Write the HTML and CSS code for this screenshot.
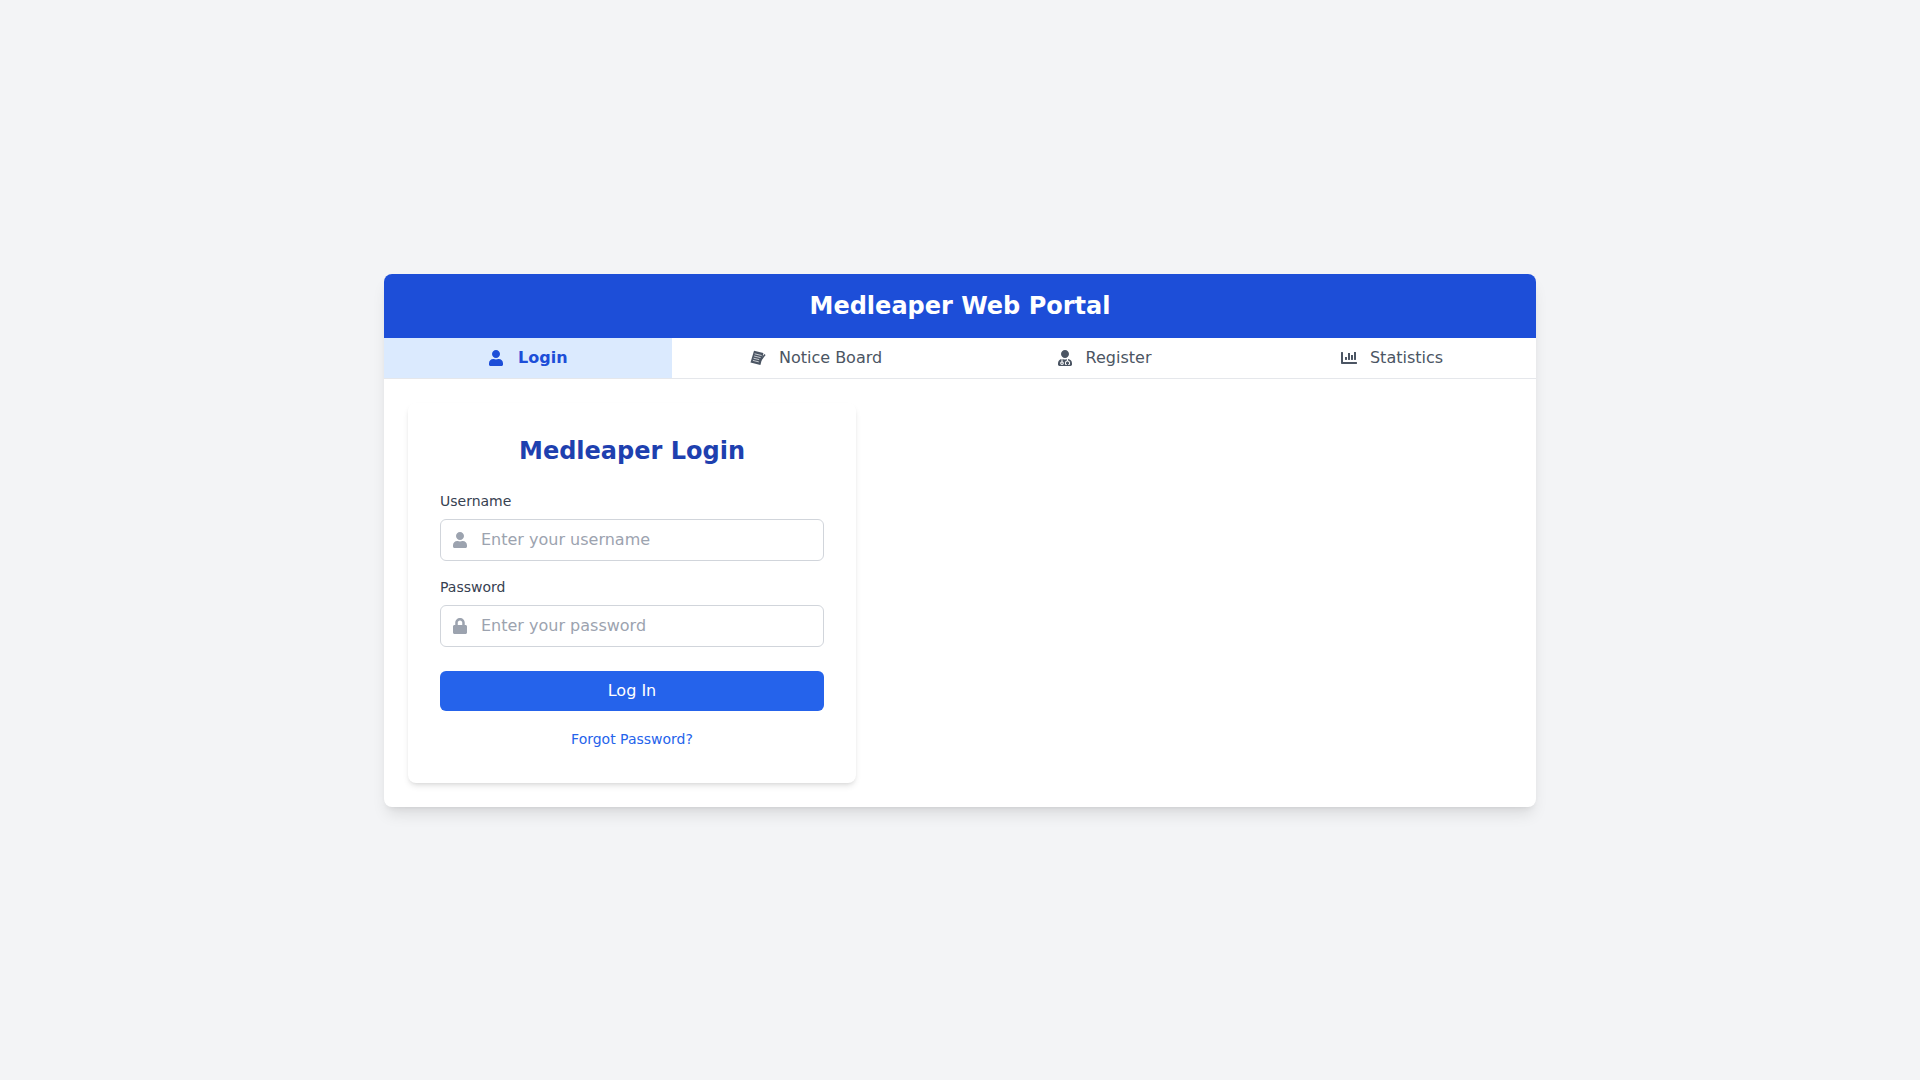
FILE: index.html
```
<!DOCTYPE html>
<html lang="en">
<head>
<meta charset="UTF-8">
<meta name="viewport" content="width=device-width, initial-scale=1.0">
<title>Medleaper Web Portal</title>
<link rel="stylesheet" href="styles.css">
</head>
<body>
<div class="portal">
	<header class="portal-header">
		<h1>Medleaper Web Portal</h1>
	</header>

	<!-- Tabs -->
	<nav class="tabs">
		<button type="button" class="tab active">
			<svg class="icon" width="16" height="16" viewBox="0 0 448 512" aria-hidden="true"><path d="M224 256c70.7 0 128-57.3 128-128S294.7 0 224 0 96 57.3 96 128s57.3 128 128 128zm89.6 32h-16.7c-22.2 10.2-46.9 16-72.9 16s-50.6-5.8-72.9-16h-16.7C60.2 288 0 348.2 0 422.4V464c0 26.5 21.5 48 48 48h352c26.5 0 48-21.5 48-48v-41.6c0-74.2-60.2-134.4-134.4-134.4z"/></svg>
			Login
		</button>
		<button type="button" class="tab">
			<svg class="icon" width="16" height="16" viewBox="0 0 16 16" aria-hidden="true">
				<path d="M4 0.8L13.4 3L12.8 6L10.4 15L0.5 12.6Z"/>
				<path class="lines" d="M4.6 3.8L11.6 5.5M4.1 6L10.6 7.6M3.5 8.2L9.2 9.6M2.9 10.4L8.8 11.9"/>
				<path d="M14.4 4L15.6 5L11.4 10.6L9.8 11.4L10 9.6Z"/>
			</svg>
			Notice Board
		</button>
		<button type="button" class="tab">
			<svg class="icon" width="16" height="16" viewBox="0 0 448 512" aria-hidden="true"><path d="M224 256c70.7 0 128-57.3 128-128S294.7 0 224 0 96 57.3 96 128s57.3 128 128 128zM104 424c0 13.3 10.7 24 24 24s24-10.7 24-24-10.7-24-24-24-24 10.7-24 24zm216-135.4v49c36.5 7.4 64 39.8 64 78.4v41.7c0 7.6-5.4 14.2-12.9 15.7l-32.2 6.4c-4.3.9-8.5-1.9-9.4-6.3l-3.1-15.7c-.9-4.3 1.9-8.6 6.3-9.4l19.3-3.9V416c0-62.8-96-65.1-96 1.9v26.7l19.3 3.9c4.3.9 7.1 5.1 6.3 9.4l-3.1 15.7c-.9 4.3-5.1 7.1-9.4 6.3l-31.2-4.2c-7.9-1.1-13.8-7.8-13.8-15.9V416c0-38.6 27.5-70.9 64-78.4v-45.2c-2.2.7-4.4 1.1-6.6 1.9-18 6.3-37.3 9.8-57.4 9.8s-39.4-3.5-57.4-9.8c-7.4-2.6-14.9-4.2-22.6-5.2v81.6c23.1 6.9 40 28.1 40 53.4 0 30.9-25.1 56-56 56s-56-25.1-56-56c0-25.3 16.9-46.5 40-53.4v-80.4C48.5 301 0 355.8 0 422.4v44.8C0 491.9 20.1 512 44.8 512h358.4c24.7 0 44.8-20.1 44.8-44.8v-44.8c0-72-56.8-130.3-128-133.8z"/></svg>
			Register
		</button>
		<button type="button" class="tab">
			<svg class="icon" width="16" height="16" viewBox="0 0 512 512" aria-hidden="true"><path d="M332.8 320h38.4c6.4 0 12.8-6.4 12.8-12.8V172.8c0-6.4-6.4-12.8-12.8-12.8h-38.4c-6.4 0-12.8 6.4-12.8 12.8v134.4c0 6.4 6.4 12.8 12.8 12.8zm96 0h38.4c6.4 0 12.8-6.4 12.8-12.8V76.8c0-6.4-6.4-12.8-12.8-12.8h-38.4c-6.4 0-12.8 6.4-12.8 12.8v230.4c0 6.4 6.4 12.8 12.8 12.8zm-288 0h38.4c6.4 0 12.8-6.4 12.8-12.8v-70.4c0-6.4-6.4-12.8-12.8-12.8h-38.4c-6.4 0-12.8 6.4-12.8 12.8v70.4c0 6.4 6.4 12.8 12.8 12.8zm96 0h38.4c6.4 0 12.8-6.4 12.8-12.8V108.8c0-6.4-6.4-12.8-12.8-12.8h-38.4c-6.4 0-12.8 6.4-12.8 12.8v198.4c0 6.4 6.4 12.8 12.8 12.8zM496 384H64V80c0-8.8-7.2-16-16-16H16C7.2 64 0 71.2 0 80v336c0 17.7 14.3 32 32 32h464c8.8 0 16-7.2 16-16v-32c0-8.8-7.2-16-16-16z"/></svg>
			Statistics
		</button>
	</nav>

	<!-- Login form -->
	<main class="content">
		<form class="login-card">
			<h2>Medleaper Login</h2>
			<div class="field">
				<label for="username">Username</label>
				<div class="input-box">
					<svg width="14" height="16" viewBox="0 0 448 512" aria-hidden="true"><path d="M224 256c70.7 0 128-57.3 128-128S294.7 0 224 0 96 57.3 96 128s57.3 128 128 128zm89.6 32h-16.7c-22.2 10.2-46.9 16-72.9 16s-50.6-5.8-72.9-16h-16.7C60.2 288 0 348.2 0 422.4V464c0 26.5 21.5 48 48 48h352c26.5 0 48-21.5 48-48v-41.6c0-74.2-60.2-134.4-134.4-134.4z"/></svg>
					<input type="text" id="username" placeholder="Enter your username">
				</div>
			</div>
			<div class="field">
				<label for="password">Password</label>
				<div class="input-box">
					<svg width="14" height="16" viewBox="0 0 448 512" aria-hidden="true"><path d="M400 224h-24v-72C376 68.2 307.8 0 224 0S72 68.2 72 152v72H48c-26.5 0-48 21.5-48 48v192c0 26.5 21.5 48 48 48h352c26.5 0 48-21.5 48-48V272c0-26.5-21.5-48-48-48zm-104 0H152v-72c0-39.7 32.3-72 72-72s72 32.3 72 72v72z"/></svg>
					<input type="password" id="password" placeholder="Enter your password">
				</div>
			</div>
			<button type="submit" class="login-btn">Log In</button>
			<div class="forgot">
				<a href="#">Forgot Password?</a>
			</div>
		</form>
	</main>
</div>
</body>
</html>
```

FILE: styles.css
```
*{
	box-sizing: border-box;
	margin: 0;
	padding: 0;
}
body{
	min-height: 100vh;
	display: flex;
	align-items: center;
	justify-content: center;
	background: #f3f4f6;
	color: #000;
	font-family: "DejaVu Sans", sans-serif;
	font-size: 16px;
	line-height: 24px;
}
button, input{
	font: inherit;
	border: none;
	background: none;
}
button{
	cursor: pointer;
}

.portal{
	width: 100%;
	max-width: 1152px;
	background: #fff;
	border-radius: 8px;
	overflow: hidden;
	box-shadow: 0 10px 15px -3px rgba(0,0,0,0.1), 0 4px 6px -4px rgba(0,0,0,0.1);
}
.portal-header{
	padding: 16px;
	background: #1d4ed8;
	color: #fff;
	text-align: center;
}
h1, h2{
	font-size: 24px;
	line-height: 32px;
	font-weight: bold;
}

/* tabs */
.tabs{
	display: flex;
	border-bottom: 1px solid #e5e7eb;
}
.tab{
	flex: 1;
	padding: 8px 16px;
	color: #4b5563;
}
.tab.active{
	background: #dbeafe;
	color: #1d4ed8;
	font-weight: bold;
}
.icon{
	margin-right: 8px;
	vertical-align: -3px;
	fill: currentColor;
}
.lines{
	fill: none;
	stroke: #fff;
	stroke-width: 0.7;
}

/* login */
.content{
	padding: 24px;
}
.login-card{
	max-width: 448px;
	padding: 32px;
	border-radius: 8px;
	background: #fff;
	box-shadow: 0 4px 6px -1px rgba(0,0,0,0.1), 0 2px 4px -2px rgba(0,0,0,0.1);
}
.login-card h2{
	margin-bottom: 24px;
	color: #1e40af;
	text-align: center;
}
.field{
	margin-bottom: 16px;
}
.field label{
	display: block;
	margin-bottom: 8px;
	color: #374151;
	font-size: 14px;
	line-height: 20px;
}
.input-box{
	display: flex;
	align-items: center;
	padding-left: 12px;
	border: 1px solid #d1d5db;
	border-radius: 6px;
}
.input-box:focus-within{
	border-color: #2563eb;
}
.input-box svg{
	fill: #9ca3af;
}
.input-box input{
	flex: 1;
	min-width: 0;
	height: 40px;
	padding: 8px 12px 8px 14px;
	outline: none;
}
.input-box input::placeholder{
	color: #9ca3af;
}
.login-btn{
	display: block;
	width: 100%;
	margin-top: 24px;
	padding: 8px 16px;
	border-radius: 6px;
	background: #2563eb;
	color: #fff;
}
.forgot{
	margin-top: 16px;
	text-align: center;
}
.forgot a{
	color: #2563eb;
	font-size: 14px;
	text-decoration: none;
}
```
